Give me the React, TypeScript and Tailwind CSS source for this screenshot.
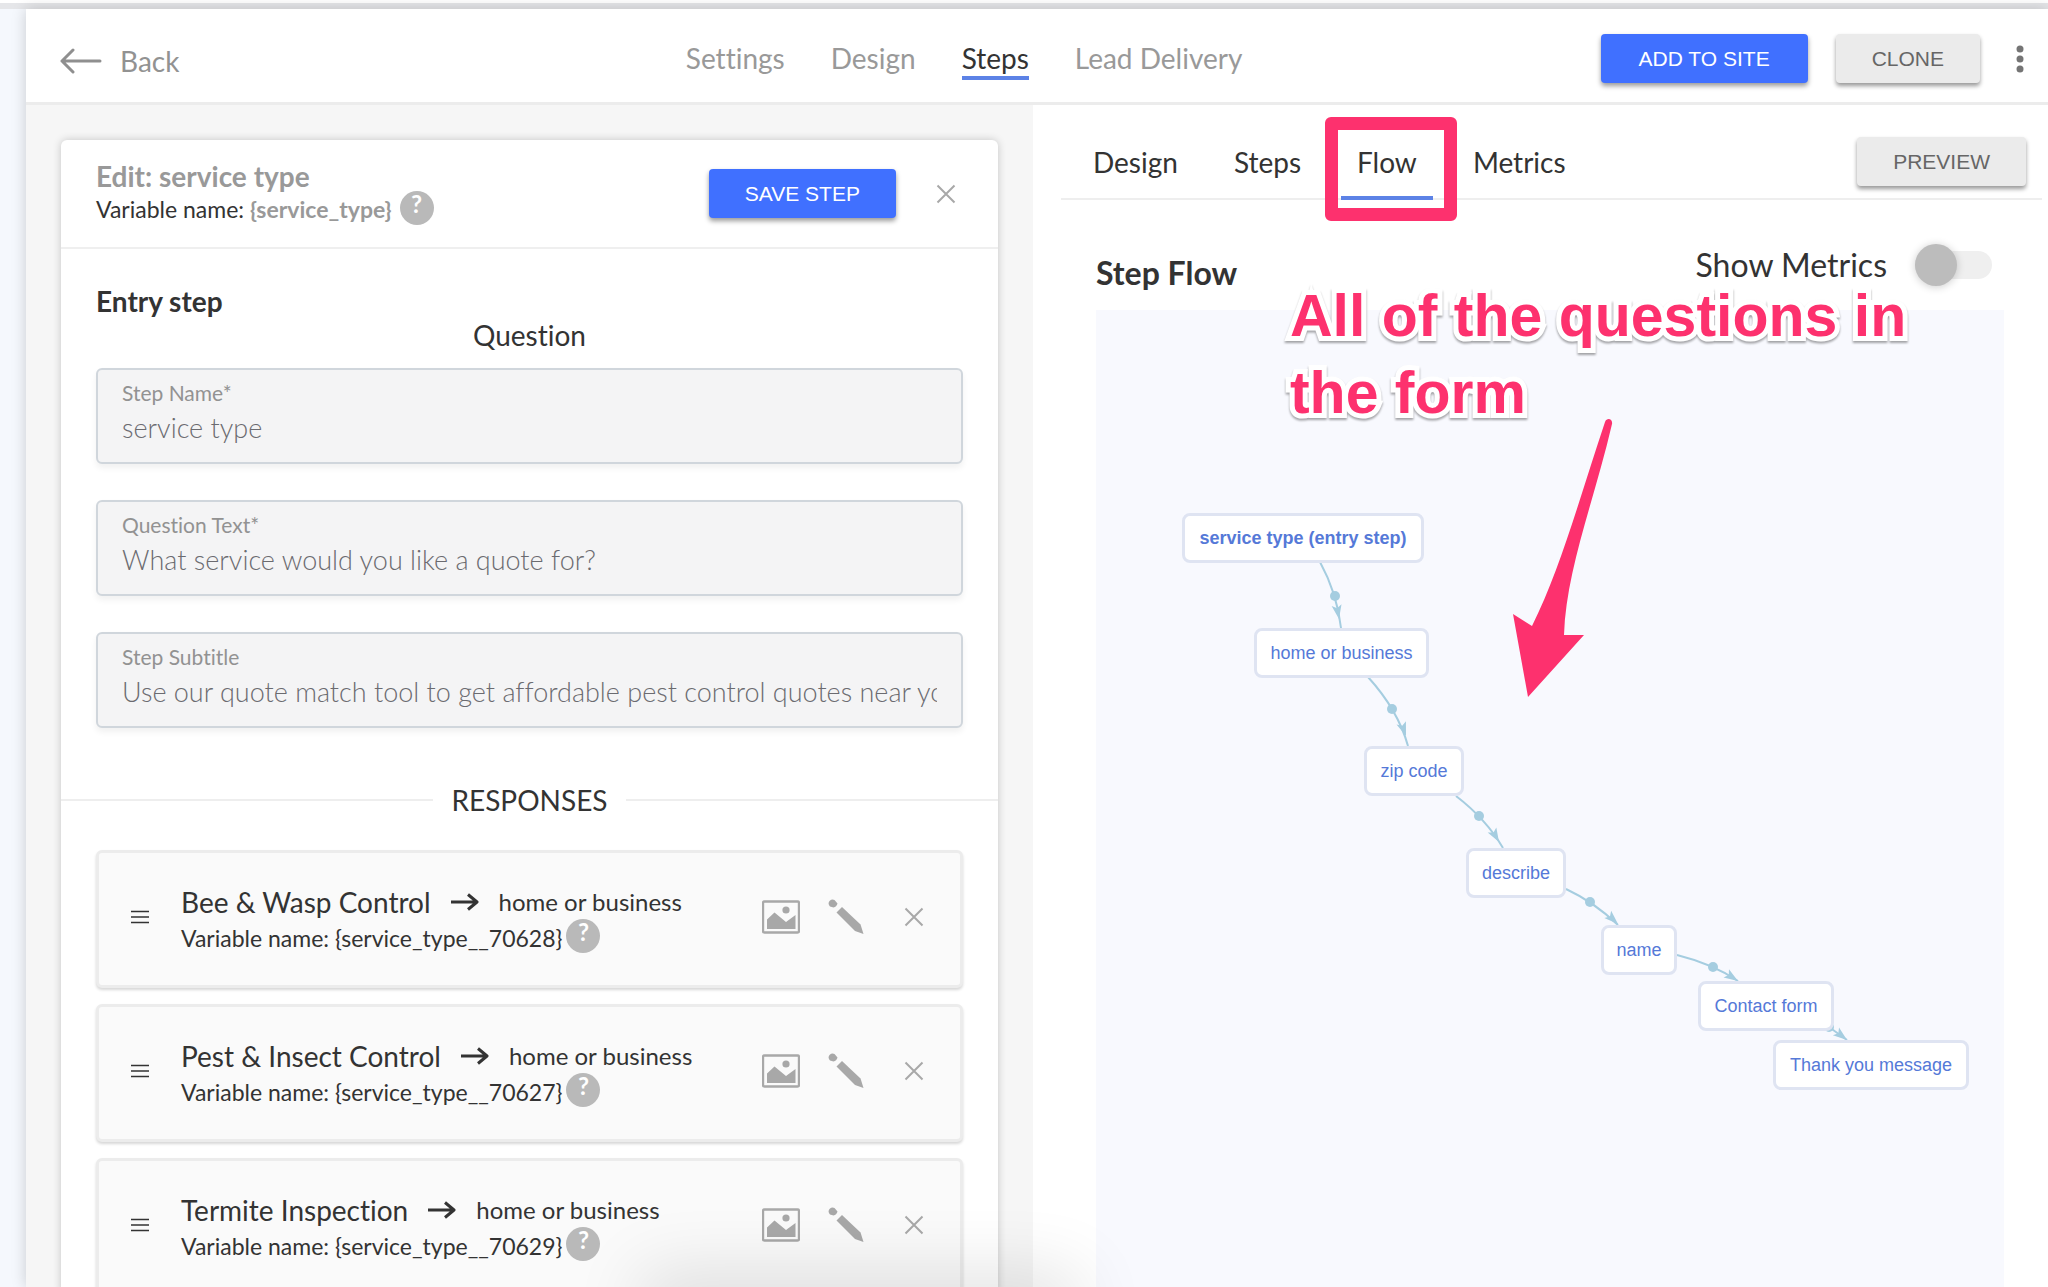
import React, { useState } from 'react';

const navItems = ['Settings', 'Design', 'Steps', 'Lead Delivery'];
const tabs = ['Design', 'Steps', 'Flow', 'Metrics'];

const responses = [
  { id: 70628, title: 'Bee & Wasp Control', next: 'home or business' },
  { id: 70627, title: 'Pest & Insect Control', next: 'home or business' },
  { id: 70629, title: 'Termite Inspection', next: 'home or business' },
];

const nodes = [
  { label: 'service type (entry step)', place: 'left-[86px] top-[203px] w-[242px] font-bold' },
  { label: 'home or business', place: 'left-[158px] top-[318px] w-[175px]' },
  { label: 'zip code', place: 'left-[268px] top-[436px] w-[100px]' },
  { label: 'describe', place: 'left-[370px] top-[538px] w-[100px]' },
  { label: 'name', place: 'left-[505px] top-[615px] w-[76px]' },
  { label: 'Contact form', place: 'left-[602px] top-[671px] w-[136px]' },
  { label: 'Thank you message', place: 'left-[677px] top-[730px] w-[196px]' },
];

// line, midpoint dot and arrow head of each link, in canvas coordinates
const edges = [
  { d: 'M224 252 Q241 283 245 318', dot: [239, 286], tip: [243, 309], angle: 80 },
  { d: 'M272 367 Q302 400 312 436', dot: [296, 399], tip: [310, 426], angle: 70 },
  { d: 'M360 486 Q390 509 407 538', dot: [383, 506], tip: [403, 532], angle: 60 },
  { d: 'M470 579 Q498 592 522 615', dot: [494, 592], tip: [522, 614], angle: 43 },
  { d: 'M581 645 Q617 654 642 671', dot: [617, 657], tip: [642, 671], angle: 33 },
  { d: 'M733 717 L751 730', dot: [733, 717], tip: [751, 730], angle: 38 },
];

const CloseIcon = () => (
  <svg viewBox="0 0 20 20" className="w-5 h-5" fill="none" stroke="#a8a8a8" strokeWidth="2">
    <path d="M1.5 1.5 18.5 18.5M18.5 1.5 1.5 18.5" />
  </svg>
);

const BackIcon = () => (
  <svg viewBox="0 0 42 26" className="w-[42px] h-[26px]" fill="none" stroke="#8f8f8f" strokeWidth="3" strokeLinecap="round" strokeLinejoin="round">
    <path d="M2 13H40M13 2 2 13 13 24" />
  </svg>
);

const ArrowIcon = () => (
  <svg viewBox="0 0 28 18" className="w-7 h-[18px]" fill="none" stroke="#333333" strokeWidth="3">
    <path d="M0 9H26M17 1.5 26 9 17 16.5" strokeLinejoin="round" />
  </svg>
);

const ImageIcon = () => (
  <svg viewBox="0 0 38 34" className="w-[38px] h-[34px]" fill="#a8a8a8">
    <rect x="1" y="1.5" width="36" height="31" rx="1.5" fill="none" stroke="#a8a8a8" strokeWidth="2.4" />
    <circle cx="24" cy="10" r="3.6" />
    <path d="M5 19.5 12.5 12.5 24 22 33.5 15V29H5Z" />
  </svg>
);

const PencilIcon = () => (
  <svg viewBox="0 0 36 36" className="w-9 h-9" fill="#a8a8a8">
    <path d="M1.5 2Q4 -.3 6.500 1L9.500 4.500Q8.500 8 5.500 8.500L2 7.500Q-.6 5 1.500 2Z" />
    <path d="M14 8 32.500 25.500 35.500 35 27 32 8.500 13.500Z" />
  </svg>
);

const MenuIcon = () => (
  <svg viewBox="0 0 18 14" className="w-[18px] h-[14px]" stroke="#333333" strokeWidth="1.6">
    <path d="M0 1.5H18M0 7H18M0 12.5H18" />
  </svg>
);

const HelpButton = () => (
  <button aria-label="Help" className="w-[34px] h-[34px] mb-1 rounded-full bg-[#b9b9b9] text-white text-2xl leading-[26px] pb-2 font-bold flex-shrink-0">
    ?
  </button>
);

const Field = ({ id, label, value }: { id: string; label: string; value: string }) => {
  const [text, setText] = useState(value);

  return (
    <div className="h-24 px-6 pt-[11px] bg-[#f4f4f5] border-2 border-[#d0d6dc] rounded-md shadow-[0_4px_6px_rgba(0,0,0,0.06)]">
      <label htmlFor={id} className="block text-[21px] leading-6 text-[#929292]">{label}</label>
      <input
        id={id}
        value={text}
        onChange={(e) => setText(e.target.value)}
        className="block w-full h-11 text-[27px] font-light text-[#6b6b70] bg-transparent outline-none"
      />
    </div>
  );
};

const ResponseRow = ({ id, title, next }: { id: number; title: string; next: string }) => (
  <li className="h-[138px] pl-8 pr-9 pb-1 flex items-center bg-[#fafafa] border-[3px] border-[#ececec] rounded-md shadow-[0_2px_3px_rgba(0,0,0,0.16)]">
    <button aria-label="Reorder" className="w-[50px]"><MenuIcon /></button>
    <div className="flex-1 min-w-0 pt-1.5">
      <div className="flex items-center h-9">
        <span className="text-[28px] leading-8">{title}</span>
        <span className="mx-5"><ArrowIcon /></span>
        <span className="text-[24px] leading-8">{next}</span>
      </div>
      <div className="flex items-center h-9 gap-1">
        <span className="text-[23px] leading-8">Variable name: {`{service_type__${id}}`}</span>
        <HelpButton />
      </div>
    </div>
    <div className="flex items-center">
      <button aria-label="Change image" className="mr-7"><ImageIcon /></button>
      <button aria-label="Edit response" className="mr-10"><PencilIcon /></button>
      <button aria-label="Remove response"><CloseIcon /></button>
    </div>
  </li>
);

const StepEditor = () => (
  <div className="bg-white rounded-md shadow-[0_0_8px_rgba(0,0,0,0.2)]">
    {/* Card header */}
    <div className="h-[109px] pl-[35px] pr-[42px] flex items-center border-b-2 border-[#efefef]">
      <div className="flex-1">
        <h1 className="text-[28px] leading-8 font-bold text-[#999999]">Edit: service type</h1>
        <div className="flex items-center h-9 gap-2 text-[23px]">
          <span>Variable name: <b className="text-[#999999]">{'{service_type}'}</b></span>
          <HelpButton />
        </div>
      </div>
      <button className="h-[49px] px-9 mr-10 rounded bg-[#4070ff] text-white text-[21px] font-['Liberation_Sans'] shadow-[0_3px_5px_rgba(0,0,0,0.4)]">
        SAVE STEP
      </button>
      <button aria-label="Close"><CloseIcon /></button>
    </div>

    {/* Question */}
    <div className="px-[35px] pt-[34px]">
      <h2 className="text-[28px] leading-9 font-bold">Entry step</h2>
      <h3 className="text-[28px] leading-8 mb-[17px] text-center">Question</h3>
      <div className="space-y-9">
        <Field id="step-name" label="Step Name*" value="service type" />
        <Field id="question-text" label="Question Text*" value="What service would you like a quote for?" />
        <Field id="step-subtitle" label="Step Subtitle" value="Use our quote match tool to get affordable pest control quotes near you" />
      </div>
    </div>

    {/* Responses */}
    <div className="flex items-center gap-[18px] mt-[54px] mb-8">
      <div className="flex-1 h-0.5 bg-[#eeeeee]" />
      <h3 className="text-[28px] leading-9">RESPONSES</h3>
      <div className="flex-1 h-0.5 bg-[#eeeeee]" />
    </div>
    <ul className="px-[35px] space-y-4">
      {responses.map((response) => (
        <ResponseRow key={response.id} {...response} />
      ))}
    </ul>
  </div>
);

const FlowCanvas = () => (
  <div className="relative flex-1 bg-[#f8f9fe] font-['Liberation_Sans']">
    <svg className="absolute left-0 top-0 w-[900px] h-[900px]" viewBox="0 0 900 900">
      {edges.map((edge) => (
        <g key={edge.d} fill="#a5cde0">
          <path d={edge.d} fill="none" stroke="#a5cde0" strokeWidth="2" />
          <circle cx={edge.dot[0]} cy={edge.dot[1]} r="5" />
          <path d="M0 0-14-5-11 0-14 5Z" transform={`translate(${edge.tip[0]} ${edge.tip[1]}) rotate(${edge.angle})`} />
        </g>
      ))}
    </svg>
    {nodes.map((node) => (
      <button
        key={node.label}
        className={`absolute h-[50px] rounded-lg border-[3px] border-[#dfe4f2] bg-white text-lg text-[#5579d8] whitespace-nowrap ${node.place}`}
      >
        {node.label}
      </button>
    ))}

    {/* Callout */}
    <p className="absolute left-[194px] -top-8 text-[59px] leading-[77px] font-bold text-[#fd316e] whitespace-nowrap [paint-order:stroke_fill] [-webkit-text-stroke:10px_white] drop-shadow-[0_2px_1px_rgba(0,0,0,0.35)]">
      All of the questions in
      <br />
      the form
    </p>
    <svg className="absolute left-[410px] top-[100px] w-[120px] h-[300px]" viewBox="410 100 120 300" fill="#fd316e">
      <path d="M509 112C511 107 517 109 516 114C499 188 470 260 468 325L488 325 432 387 417 304 436 316C464 260 483 190 509 112Z" />
    </svg>
  </div>
);

const FlowPanel = () => {
  const [showMetrics, setShowMetrics] = useState(false);

  return (
    <section className="flex-1 min-w-0 flex flex-col bg-white pl-7 pr-1.5">
      <div className="h-[95px] pl-4 pr-4 flex items-end border-b-2 border-[#eeeeee]">
        <div className="flex gap-6 flex-1">
          {tabs.map((tab) => (
            <button
              key={tab}
              className={`relative h-[61px] px-4 pb-3 -mb-0.5 text-[28px] border-b-4 ${tab === 'Flow' ? 'border-[#5c82e6]' : 'border-transparent'}`}
            >
              {tab}
              {tab === 'Flow' && (
                <span className="absolute -left-4 -right-6 -top-[22px] -bottom-[25px] border-[13px] border-[#fd316e] rounded-md" />
              )}
            </button>
          ))}
        </div>
        <button className="h-[49px] px-9 mb-3 rounded bg-[#ebebeb] text-[#666666] text-[21px] font-['Liberation_Sans'] shadow-[0_3px_4px_rgba(0,0,0,0.4)]">
          PREVIEW
        </button>
      </div>
      <div className="flex-1 flex flex-col pl-[35px] pr-[38px]">
        <div className="h-[110px] pr-3 flex items-center justify-between">
          <h2 className="text-[32px] font-bold mt-9">Step Flow</h2>
          <div className="flex items-center gap-7 mt-5">
            <label htmlFor="show-metrics" className="text-[32px]">Show Metrics</label>
            <input
              id="show-metrics"
              type="checkbox"
              role="switch"
              checked={showMetrics}
              onChange={(e) => setShowMetrics(e.target.checked)}
              className="appearance-none w-[77px] h-7 rounded-full bg-[#efefef] flex items-center checked:justify-end before:block before:w-[42px] before:h-[42px] before:rounded-full before:bg-[#bcbcbc] before:shadow-[0_1px_8px_rgba(0,0,0,0.2)]"
            />
          </div>
        </div>
        <FlowCanvas />
      </div>
    </section>
  );
};

const App = () => {
  return (
    <div className="relative h-screen overflow-hidden flex flex-col bg-[#f5f8fd] font-['Lato',sans-serif] text-[#333333] [font-variant-ligatures:none]">
      <div className="h-[9px] flex-shrink-0 bg-white pt-[3px]">
        <div className="h-[6px] bg-[#e5e6e9]" />
      </div>
      <div className="flex-1 min-h-0 ml-[26px] flex flex-col shadow-[0_0_14px_rgba(0,0,0,0.18)]">
        {/* Top bar */}
        <header className="h-24 flex-shrink-0 pl-[34px] pr-5 pt-1.5 flex items-center bg-white border-b-[3px] border-[#ececec]">
          <div className="w-[31.8%]">
            <a href="#" className="inline-flex items-center gap-[18px] pt-2 text-[28px] leading-8 text-[#929292]">
              <BackIcon />
              Back
            </a>
          </div>
          <nav className="flex gap-[46px] flex-1">
            {navItems.map((item) => (
              <a
                key={item}
                href="#"
                className={`pt-1 pb-0.5 text-[28px] leading-8 border-b-4 ${item === 'Steps' ? 'border-[#5c82e6]' : 'border-transparent text-[#999999]'}`}
              >
                {item}
              </a>
            ))}
          </nav>
          <button className="h-[49px] px-[38px] mr-7 rounded bg-[#4070ff] text-white text-[21px] font-['Liberation_Sans'] shadow-[0_3px_5px_rgba(0,0,0,0.4)]">
            ADD TO SITE
          </button>
          <button className="h-[49px] px-9 mr-8 rounded bg-[#ebebeb] text-[#666666] text-[21px] font-['Liberation_Sans'] shadow-[0_3px_4px_rgba(0,0,0,0.4)]">
            CLONE
          </button>
          <button aria-label="More" className="w-4">
            <svg viewBox="0 0 16 28" className="w-4 h-7" fill="#757575">
              <circle cx="8" cy="4" r="3.5" />
              <circle cx="8" cy="14" r="3.5" />
              <circle cx="8" cy="24" r="3.5" />
            </svg>
          </button>
        </header>

        <main className="flex-1 min-h-0 flex">
          <section className="w-[49.8%] overflow-hidden bg-[#f6f6f6] px-[35px] pt-[35px]">
            <StepEditor />
          </section>
          <FlowPanel />
        </main>
      </div>

      <div className="absolute top-full left-[32%] w-[20%] h-10 shadow-[0_0_70px_14px_rgba(0,0,0,0.12)]" />
    </div>
  );
};

export default App;
